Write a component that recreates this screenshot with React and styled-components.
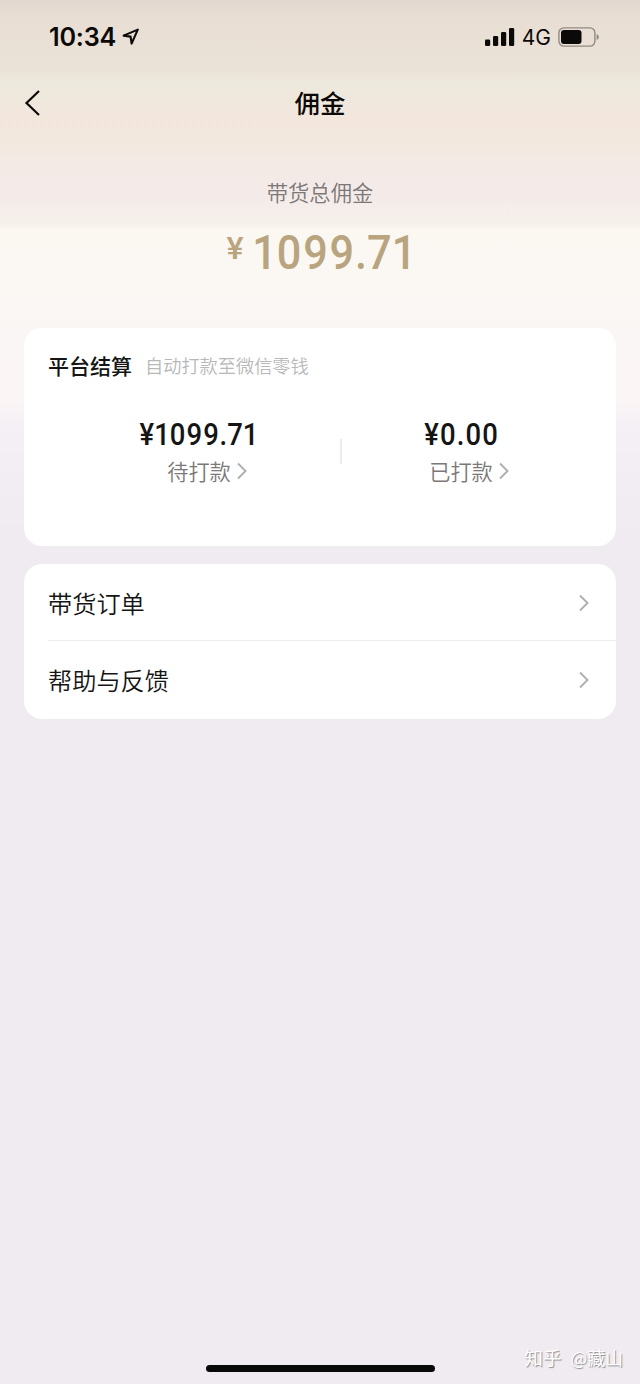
import styled, { createGlobalStyle } from "styled-components";

const GlobalStyle = createGlobalStyle`
	:root {
		--color-bg: #efebf0;
		--color-text: #151515;
		--color-text-secondary: #7c7878;
		--color-text-muted: #b8b8b8;
		--color-gold: #b8a47e;
		--color-line: #ececec;
		--font-number: Roboto, "Noto Sans CJK SC", sans-serif;
	}

	* {
		box-sizing: border-box;
	}

	body {
		margin: 0;
		background: var(--color-bg);
		color: var(--color-text);
		font-family: "Noto Sans CJK SC", sans-serif;
	}
`;

const rows = ["带货订单", "帮助与反馈"];

const settlements = [
	{ label: "待打款", amount: "¥1099.71" },
	{ label: "已打款", amount: "¥0.00" },
];

const Screen = styled.main`
	display: flex;
	flex-direction: column;
	height: 1384px;
	position: relative;
	width: 640px;
	background: linear-gradient(
		to bottom,
		#e2d8cf 0,
		#e8ded4 18px,
		#ebe2d7 70px,
		#eee9dd 82px,
		#efe8dc 98px,
		#f3e7dd 114px,
		#f3e8de 140px,
		#f3eae5 162px,
		#f4ebe9 195px,
		#f6f0eb 223px,
		#fbf7f1 230px,
		#fbf8f4 290px,
		#faf6f5 330px,
		#fbf5f5 400px,
		#f4f0f5 425px,
		#f1edf2 480px,
		#efebf0 540px
	);
`;

const StatusBar = styled.header`
	display: flex;
	align-items: center;
	height: 74px;
	padding: 0 40px 0 49px;
`;

const Time = styled.span`
	color: #0c0a09;
	font: 600 25.2px/30px Inter, sans-serif;
	letter-spacing: -0.2px;
	margin: -1px 6px 0 0;
`;

const Signals = styled.div`
	display: flex;
	align-items: center;
	margin-left: auto;
`;

const Network = styled.span`
	color: #0c0a09;
	font: 400 21px/30px Inter, sans-serif;
	margin: 1px 7px 0 7px;
`;

const NavBar = styled.nav`
	display: grid;
	grid-template-columns: 64px 1fr 64px;
	align-items: center;
	height: 58px;
`;

const BackButton = styled.button`
	background: none;
	border: none;
	display: flex;
	padding: 0 0 0 24px;
`;

const Title = styled.h1`
	color: #0c0a09;
	font-size: 25.5px;
	font-weight: 500;
	line-height: 36px;
	margin: -3px 0 0;
	text-align: center;
`;

const Total = styled.section`
	display: flex;
	flex-direction: column;
	align-items: center;
	height: 196px;
	padding-top: 44px;
`;

const TotalLabel = styled.p`
	color: var(--color-text-secondary);
	font-size: 21.3px;
	font-weight: 350;
	line-height: 32px;
	margin: 0;
`;

const TotalAmount = styled.p`
	color: var(--color-gold);
	display: flex;
	align-items: flex-start;
	font: 500 48px/56px var(--font-number);
	margin: 17px 0 0;
	padding-left: 12px;

	& small {
		font-size: 32px;
		line-height: 47px;
		margin-right: 2px;
	}
`;

const Figures = styled.span`
	display: inline-block;
	letter-spacing: 0.042em;
	transform: scaleX(0.9);
`;

// the figures are tabular, so "1" and "." need tightening
const Digit = styled.span`
	margin: ${(props) =>
		props.$char === "1"
			? "0 -0.042em"
			: props.$char === "." && props.$tight
				? "0 -0.042em 0 -0.02em"
				: "0"};
`;

const Card = styled.section`
	background: #fff;
	border-radius: 18px;
	height: ${(props) => props.$height}px;
	margin: 0 24px 18px;
`;

const CardHead = styled.div`
	display: flex;
	align-items: center;
	gap: 13px;
	padding: 20px 24px 0;
`;

const CardTitle = styled.h2`
	font-size: 21px;
	font-weight: 500;
	line-height: 32px;
	margin: 0;
`;

const CardNote = styled.span`
	color: var(--color-text-muted);
	font-size: 18.2px;
	font-weight: 350;
	line-height: 32px;
	padding-top: 1px;
`;

const Columns = styled.div`
	display: grid;
	grid-template-columns: 262px 262px;
	justify-content: center;
	padding: 36px 0 0 21px;
`;

const Column = styled.div`
	display: flex;
	flex-direction: column;
	align-items: center;
	position: relative;

	& + &::before {
		content: "";
		background: var(--color-line);
		height: 25px;
		left: 9px;
		position: absolute;
		top: 22px;
		width: 2px;
	}
`;

const Amount = styled.span`
	font: 500 30.5px/36px var(--font-number);
`;

const ColumnLabel = styled.span`
	color: var(--color-text-secondary);
	display: flex;
	align-items: center;
	gap: 6px;
	font-size: 21.2px;
	font-weight: 350;
	line-height: 32px;
	margin-top: 2px;
	padding-left: 15px;
`;

const Row = styled.div`
	display: flex;
	align-items: center;
	justify-content: space-between;
	height: 76px;
	font-size: 24.2px;
	font-weight: 350;
	margin-left: 24px;
	padding: 2px 27px 0 0;

	& > span {
		margin-top: -1px;
	}

	& + & {
		border-top: 1px solid var(--color-line);
		height: 79px;
		padding-top: 0;
	}
`;

const HomeBar = styled.div`
	align-self: center;
	background: #080808;
	border-radius: 4px;
	height: 7px;
	margin: auto 0 12px;
	width: 229px;
`;

const Watermark = styled.div`
	bottom: 12px;
	color: #fff;
	display: flex;
	font-size: 18.5px;
	gap: 9px;
	line-height: 30px;
	position: absolute;
	right: 17px;
	text-shadow: 1px 1px 1px #8f8d92;
`;

const WatermarkName = styled.span`
	font-size: 17.8px;
`;

function Digits({ value, tight }) {
	return (
		<Figures>
			{value.split("").map((char, idx) => (
				<Digit key={idx} $char={char} $tight={tight}>
					{char}
				</Digit>
			))}
		</Figures>
	);
}

function Chevron() {
	return (
		<svg width="10" height="18" viewBox="0 0 10 18" fill="none">
			<path d="M1 1.5 8.5 9 1 16.5" stroke="#afafaf" strokeWidth="1.9" />
		</svg>
	);
}

function LocationIcon() {
	return (
		<svg width="18" height="18" viewBox="0 0 18 18" fill="none">
			<path
				d="M1.6 7.6 15.8 1.6 9.6 15.6 8.6 8.6Z"
				stroke="#0c0a09"
				strokeWidth="2.1"
				strokeLinejoin="round"
			/>
		</svg>
	);
}

function SignalIcon() {
	return (
		<svg width="30" height="20" viewBox="0 0 30 20" fill="#0c0a09">
			<rect x="0" y="12.5" width="5.2" height="6.5" rx="1.3" />
			<rect x="8" y="9" width="5.2" height="10" rx="1.3" />
			<rect x="16" y="5" width="5.2" height="14" rx="1.3" />
			<rect x="24" y="1" width="5.2" height="18" rx="1.3" />
		</svg>
	);
}

function BatteryIcon() {
	return (
		<svg width="42" height="20" viewBox="0 0 42 20" fill="none">
			<rect
				x="0.9"
				y="0.9"
				width="36"
				height="18.2"
				rx="5"
				stroke="#918a82"
				strokeWidth="1.4"
			/>
			<rect x="3" y="3" width="20.5" height="14" rx="3" fill="#0c0a09" />
			<path d="M38.6 7v6c1.5-.6 2.2-1.7 2.2-3s-.7-2.4-2.2-3Z" fill="#918a82" />
		</svg>
	);
}

function App() {
	return (
		<>
			<GlobalStyle />
			<Screen>
				<StatusBar>
					<Time>10:34</Time>
					<LocationIcon />
					<Signals>
						<SignalIcon />
						<Network>4G</Network>
						<BatteryIcon />
					</Signals>
				</StatusBar>
				<NavBar>
					<BackButton aria-label="返回">
						<svg width="17" height="28" viewBox="0 0 17 28" fill="none">
							<path d="M15 2 2.5 14 15 26" stroke="#0c0a09" strokeWidth="2.2" />
						</svg>
					</BackButton>
					<Title>佣金</Title>
				</NavBar>
				<Total>
					<TotalLabel>带货总佣金</TotalLabel>
					<TotalAmount>
						<small>¥</small>
						<Digits value="1099.71" tight />
					</TotalAmount>
				</Total>
				<Card $height={218}>
					<CardHead>
						<CardTitle>平台结算</CardTitle>
						<CardNote>自动打款至微信零钱</CardNote>
					</CardHead>
					<Columns>
						{settlements.map((item) => (
							<Column key={item.label}>
								<Amount>
									<Digits
										value={item.amount}
										tight={item.amount.length > 5}
									/>
								</Amount>
								<ColumnLabel>
									{item.label}
									<Chevron />
								</ColumnLabel>
							</Column>
						))}
					</Columns>
				</Card>
				<Card $height={155}>
					{rows.map((row) => (
						<Row key={row}>
							<span>{row}</span>
							<Chevron />
						</Row>
					))}
				</Card>
				<HomeBar />
				<Watermark>
					<span>知乎</span>
					<WatermarkName>@藏山</WatermarkName>
				</Watermark>
			</Screen>
		</>
	);
}

export default App;
